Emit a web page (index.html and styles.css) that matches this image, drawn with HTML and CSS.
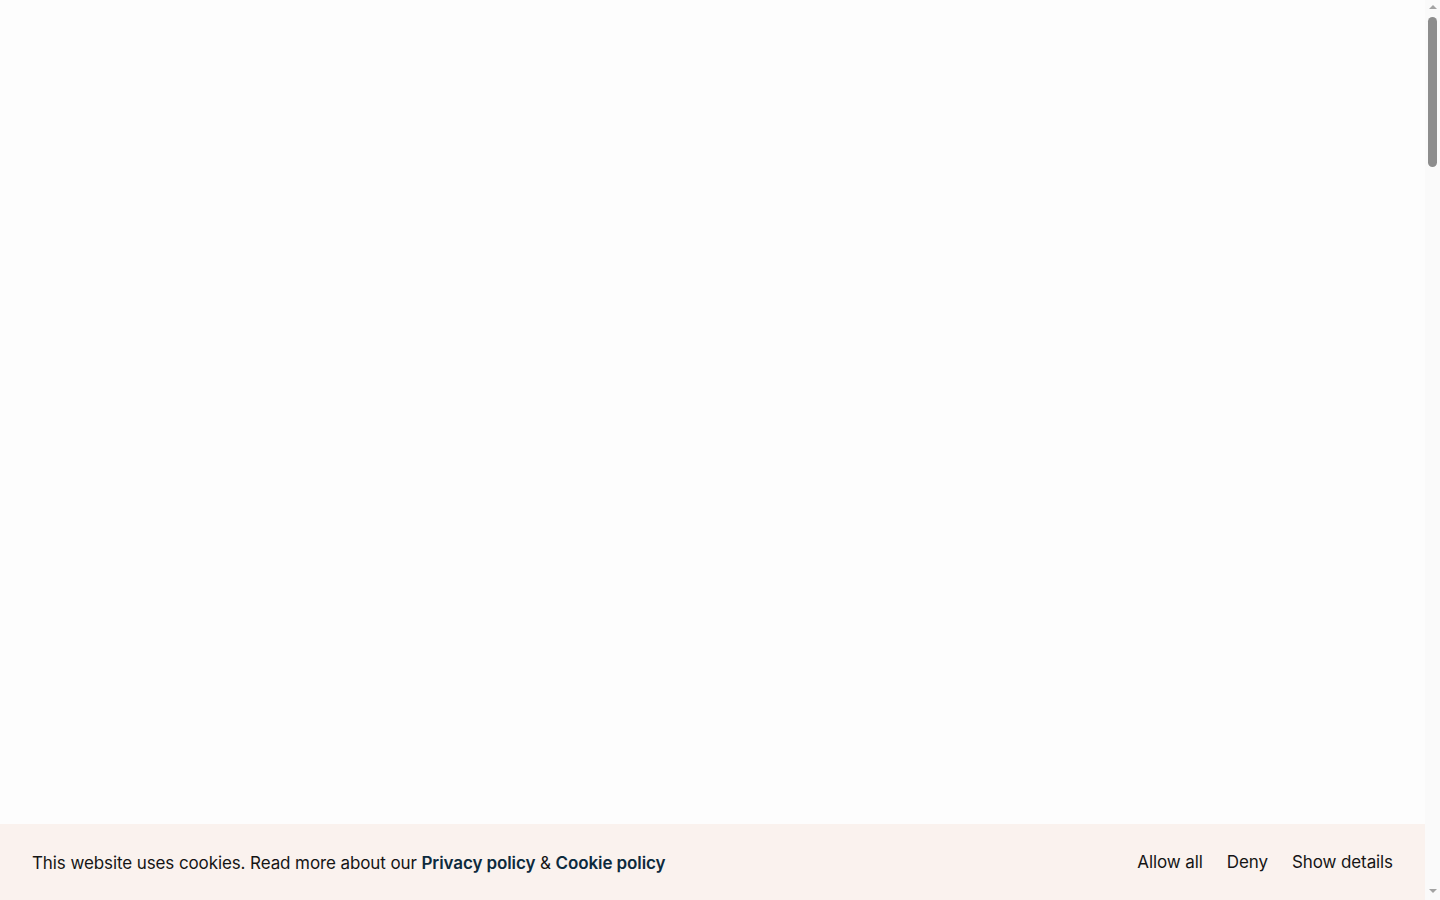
FILE: index.html
```html
<!DOCTYPE html>
<html lang="en">
<head>
<meta charset="utf-8">
<title>Cookies</title>
<link rel="stylesheet" href="styles.css">
</head>
<body>
<div class="viewport">
  <main class="page"></main>
  <div class="cookie-banner">
    <p class="cookie-text">This website uses cookies. Read more about our <a class="cookie-link" href="#">Privacy policy</a> &amp; <a class="cookie-link" href="#">Cookie policy</a></p>
    <div class="cookie-actions">
      <button class="cookie-btn" type="button">Allow all</button>
      <button class="cookie-btn" type="button">Deny</button>
      <button class="cookie-btn" type="button">Show details</button>
    </div>
  </div>
</div>
<div class="rail" aria-hidden="true">
  <div class="rail-btn"><span class="arrow-up"></span></div>
  <div class="rail-track"><div class="rail-thumb"></div></div>
  <div class="rail-btn"><span class="arrow-down"></span></div>
</div>
</body>
</html>
```
FILE: styles.css
```css
html, body {
  margin: 0;
  padding: 0;
  height: 100%;
  overflow: hidden;
  background: #fdfdfd;
  font-family: Inter, "Liberation Sans", sans-serif;
}
body {
  display: flex;
}
.viewport {
  flex: 1;
  display: flex;
  flex-direction: column;
  min-width: 0;
}
.page {
  flex: 1;
}
.cookie-banner {
  height: 76px;
  flex: none;
  box-sizing: border-box;
  padding: 0 32px;
  background: #faf2ee;
  display: flex;
  align-items: center;
  justify-content: space-between;
}
.cookie-text {
  margin: 2px 0 0;
  font-size: 17px;
  color: #151515;
  letter-spacing: -0.1px;
}
.cookie-link {
  color: #0d2a3d;
  font-weight: 600;
  text-decoration: none;
}
.cookie-actions {
  display: flex;
  gap: 24px;
}
.cookie-btn {
  background: none;
  border: 0;
  padding: 0;
  font-family: inherit;
  font-size: 17px;
  color: #151515;
  cursor: pointer;
  letter-spacing: -0.1px;
}

/* scrollbar rail */
.rail {
  width: 15px;
  flex: none;
  background: #fafafa;
  display: flex;
  flex-direction: column;
}
.rail-btn {
  height: 15px;
  flex: none;
  display: flex;
  align-items: center;
  justify-content: center;
}
.arrow-up {
  width: 0;
  height: 0;
  border-left: 4px solid transparent;
  border-right: 4px solid transparent;
  border-bottom: 4px solid #a3a3a3;
  margin-top: -2px;
}
.arrow-down {
  width: 0;
  height: 0;
  border-left: 4px solid transparent;
  border-right: 4px solid transparent;
  border-top: 4px solid #a3a3a3;
  margin-top: -3px;
}
.rail-track {
  flex: 1;
  padding: 2px 3px 0;
}
.rail-thumb {
  height: 150px;
  background: #8d8d8d;
  border-radius: 5px;
}
```
